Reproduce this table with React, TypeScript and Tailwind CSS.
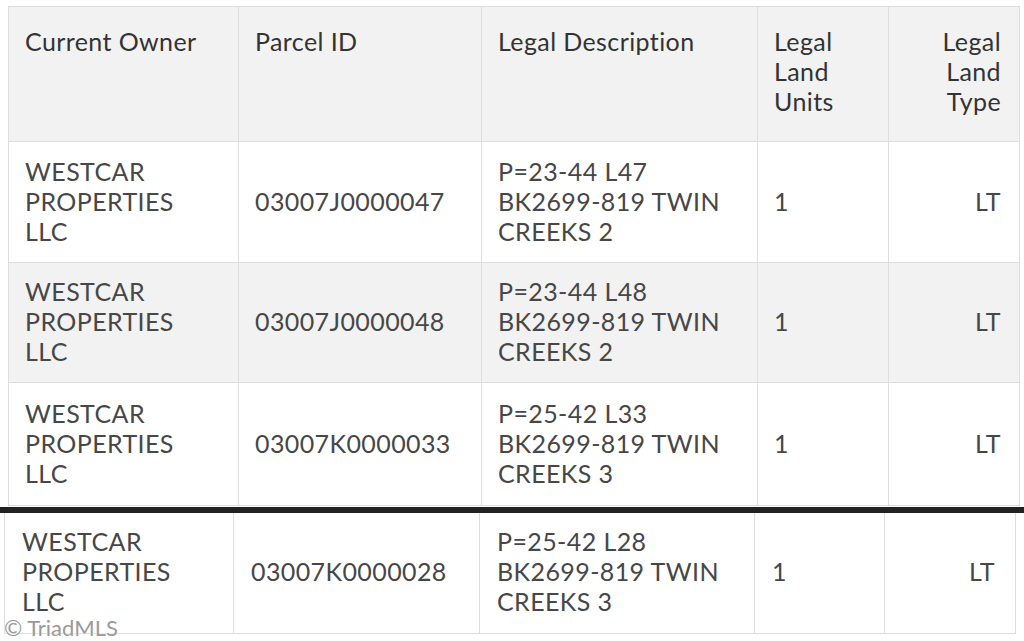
import React from "react";

type Row = { owner: string[]; parcel: string; legal: string[]; units: string; type: string };

const topRows: (Row & { bg: string; h: string })[] = [
  {
    owner: ["WESTCAR", "PROPERTIES", "LLC"],
    parcel: "03007J0000047",
    legal: ["P=23-44 L47", "BK2699-819 TWIN", "CREEKS 2"],
    units: "1",
    type: "LT",
    bg: "bg-white",
    h: "h-[121px]",
  },
  {
    owner: ["WESTCAR", "PROPERTIES", "LLC"],
    parcel: "03007J0000048",
    legal: ["P=23-44 L48", "BK2699-819 TWIN", "CREEKS 2"],
    units: "1",
    type: "LT",
    bg: "bg-[#f2f2f2]",
    h: "h-[120px]",
  },
  {
    owner: ["WESTCAR", "PROPERTIES", "LLC"],
    parcel: "03007K0000033",
    legal: ["P=25-42 L33", "BK2699-819 TWIN", "CREEKS 3"],
    units: "1",
    type: "LT",
    bg: "bg-white",
    h: "h-[123px]",
  },
];

const bottomRow: Row = {
  owner: ["WESTCAR", "PROPERTIES", "LLC"],
  parcel: "03007K0000028",
  legal: ["P=25-42 L28", "BK2699-819 TWIN", "CREEKS 3"],
  units: "1",
  type: "LT",
};

const Lines = ({ lines }: { lines: string[] }) => (
  <>
    {lines.map((l, i) => (
      <div key={i} className="whitespace-nowrap">
        {l}
      </div>
    ))}
  </>
);

const td = "border border-[#dedede] align-middle pl-[16px] pr-[8px] pt-0 pb-[3px]";

export default function App() {
  return (
    <div
      className="relative w-[1024px] h-[641px] overflow-hidden bg-white text-[#474747] text-[25px] leading-[30px] tracking-[0.4px]"
      style={{ fontFamily: "Lato, 'Open Sans', sans-serif" }}
    >
      {/* top table */}
      <div className="pl-[8px] pt-[6px]">
        <table className="table-fixed border-collapse w-[1011px]">
          <colgroup>
            <col className="w-[230px]" />
            <col className="w-[243px]" />
            <col className="w-[276px]" />
            <col className="w-[131px]" />
            <col className="w-[131px]" />
          </colgroup>
          <thead>
            <tr className="h-[135px] bg-[#f2f2f2] text-[#333333]">
              <th className="border border-[#dedede] align-top text-left font-normal px-[16px] pt-[19px]">Current Owner</th>
              <th className="border border-[#dedede] align-top text-left font-normal px-[16px] pt-[19px]">Parcel ID</th>
              <th className="border border-[#dedede] align-top text-left font-normal px-[16px] pt-[19px]">Legal Description</th>
              <th className="border border-[#dedede] align-top text-left font-normal px-[16px] pt-[19px]">
                <Lines lines={["Legal", "Land", "Units"]} />
              </th>
              <th className="border border-[#dedede] align-top text-right font-normal pl-[16px] pr-[18px] pt-[19px]">
                <Lines lines={["Legal", "Land", "Type"]} />
              </th>
            </tr>
          </thead>
          <tbody>
            {topRows.map((r, i) => (
              <tr key={i} className={`${r.h} ${r.bg}`}>
                <td className={td}>
                  <Lines lines={r.owner} />
                </td>
                <td className={td}>{r.parcel}</td>
                <td className={td}>
                  <Lines lines={r.legal} />
                </td>
                <td className={td}>{r.units}</td>
                <td className="border border-[#dedede] align-middle text-right pl-[16px] pr-[18px] pb-[3px]">{r.type}</td>
              </tr>
            ))}
          </tbody>
        </table>
      </div>

      {/* divider */}
      <div className="h-[6px] w-full bg-[#222222] mt-[1px]" />

      {/* bottom table */}
      <div className="pl-[4px]">
        <table className="table-fixed border-collapse w-[1011px]">
          <colgroup>
            <col className="w-[229px]" />
            <col className="w-[246px]" />
            <col className="w-[275px]" />
            <col className="w-[130px]" />
            <col className="w-[131px]" />
          </colgroup>
          <tbody>
            <tr className="h-[120px] bg-white">
              <td className="border border-t-0 border-[#dedede] align-middle pl-[17px] pr-[8px] pb-[4px]">
                <Lines lines={bottomRow.owner} />
              </td>
              <td className="border border-t-0 border-[#dedede] align-middle pl-[17px] pb-[4px]">{bottomRow.parcel}</td>
              <td className="border border-t-0 border-[#dedede] align-middle pl-[17px] pb-[4px]">
                <Lines lines={bottomRow.legal} />
              </td>
              <td className="border border-t-0 border-[#dedede] align-middle pl-[17px] pb-[4px]">{bottomRow.units}</td>
              <td className="border border-t-0 border-[#dedede] align-middle text-right pr-[20px] pb-[4px]">{bottomRow.type}</td>
            </tr>
          </tbody>
        </table>
      </div>

      {/* watermark */}
      <div
        className="absolute left-[4px] top-[615px] text-[22px] leading-[26px] tracking-normal text-[#9a9a9a]"
        style={{ textShadow: "0 0 2px #fff, 0 0 2px #fff" }}
      >
        © TriadMLS
      </div>
    </div>
  );
}
